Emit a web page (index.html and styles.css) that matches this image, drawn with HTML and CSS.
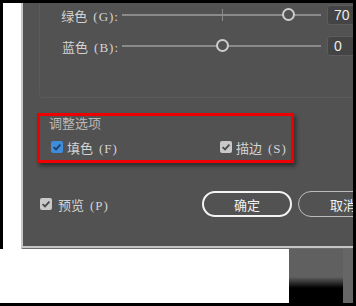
FILE: index.html
```html
<!DOCTYPE html>
<html lang="zh-CN">
<head>
  <meta charset="UTF-8">
  <title>颜色调整</title>
  <link rel="stylesheet" href="styles.css">
</head>
<body>
<div class="screen">
  <div class="upper">
    <div class="paper"></div>
    <div class="dialog">
      <div class="color-group">
        <div class="slider-row">
          <span class="field-label">绿色<span class="key">(G):</span></span>
          <div class="slider">
            <span class="tick"></span>
            <span class="knob" style="left: 166px"></span>
          </div>
          <div class="value-box">70</div>
        </div>
        <div class="slider-row">
          <span class="field-label">蓝色<span class="key">(B):</span></span>
          <div class="slider">
            <span class="knob" style="left: 100px"></span>
          </div>
          <div class="value-box">0</div>
        </div>
      </div>

      <div class="adjust-group">
        <div class="group-title">调整选项</div>
        <div class="check-row">
          <label class="check fill-check">
            <span class="box box-blue">
              <svg viewBox="0 0 12 12" width="12" height="12"><polyline points="2.6,6.2 5,8.4 9.4,3.6" fill="none" stroke="#1d3f66" stroke-width="1.8"/></svg>
            </span>
            <span>填色<span class="key">(F)</span></span>
          </label>
          <label class="check">
            <span class="box box-gray">
              <svg viewBox="0 0 12 12" width="12" height="12"><polyline points="2.6,6.2 5,8.4 9.4,3.6" fill="none" stroke="#4a4a4a" stroke-width="1.8"/></svg>
            </span>
            <span>描边<span class="key">(S)</span></span>
          </label>
        </div>
      </div>

      <div class="footer">
        <label class="check preview">
          <span class="box box-gray">
            <svg viewBox="0 0 12 12" width="12" height="12"><polyline points="2.6,6.2 5,8.4 9.4,3.6" fill="none" stroke="#4a4a4a" stroke-width="1.8"/></svg>
          </span>
          <span>预览<span class="key">(P)</span></span>
        </label>
        <button class="btn btn-ok">确定</button>
        <button class="btn">取消</button>
      </div>
    </div>
  </div>
  <div class="lower">
    <div class="paper-bottom"></div>
    <div class="shade"></div>
    <div class="side"></div>
  </div>
</div>
</body>
</html>
```

FILE: styles.css
```css
html, body {
    margin: 0;
    padding: 0;
    background: #000;
    overflow: hidden;
}

.screen {
    width: 356px;
    height: 306px;
    padding: 3px 0;
    box-sizing: border-box;
    font-family: "Liberation Serif", "Noto Sans CJK SC", serif;
    font-size: 13px;
    color: #d4d4d4;
}

.key {
    margin-left: 6px;
    letter-spacing: 1px;
    font-family: "Liberation Serif", serif;
}

.upper {
    height: 246px;
    padding-left: 3px;

    display: flex;
}

.paper {
    width: 18px;
    background: #fff;
}

.dialog {
    width: 332px;
    box-sizing: border-box;
    background: #525252;
    border-left: 2px solid #c8c8c8;
    border-bottom: 1px solid #6c6c6c;
    box-shadow: inset 0 -2px 0 #c6c6c6;
    overflow: hidden;
}

/* colour sliders */
.color-group {
    width: 340px;
    margin-left: 16px;
    padding: 2px 0 41px;
    border: 1px solid #5a5a5a;
    border-top: none;
    border-radius: 0 0 0 5px;

    display: flex;
    flex-direction: column;
    gap: 11px;
}

.slider-row {
    height: 20px;

    display: flex;
    align-items: center;
}

.field-label {
    width: 79px;
    text-align: right;
    white-space: nowrap;
}

.slider {
    position: relative;
    width: 199px;
    height: 2px;
    margin-left: 3px;
    background: #8a8a8a;
}

.tick {
    position: absolute;
    left: 100px;
    top: -5px;
    width: 1px;
    height: 12px;
    background: #8a8a8a;
}

.knob {
    position: absolute;
    top: -6px;
    width: 13px;
    height: 13px;
    margin-left: -6px;
    box-sizing: border-box;
    border: 2px solid #cdcdcd;
    border-radius: 50%;
    background: #525252;
}

.value-box {
    width: 40px;
    height: 20px;
    margin-left: 6px;
    padding-left: 6px;
    box-sizing: border-box;
    background: #444;
    border: 1px solid #5c5c5c;
    border-radius: 3px;
    font-family: "Liberation Sans", sans-serif;
    font-size: 14px;
    line-height: 18px;
    color: #ececec;
}

/* highlighted group */
.adjust-group {
    width: 257px;
    margin: 15px 0 0 14px;
    padding: 0 0 5px;
    box-sizing: border-box;
    border: 3px solid #ee0000;
    box-shadow: 2px 3px 4px rgba(0, 0, 0, 0.45);
}

.group-title {
    padding-left: 9px;
    line-height: 16px;
    color: #b9b9b9;
}

.check-row {
    height: 16px;
    margin-top: 7px;
    padding-left: 11px;

    display: flex;
    align-items: center;
}

.check {
    display: flex;
    align-items: center;
    gap: 4px;
    white-space: nowrap;
}

.fill-check {
    width: 169px;
}

.box {
    width: 12px;
    height: 12px;
    border-radius: 2px;

    display: flex;
}

.box-blue {
    background: #3e8ddd;
}

.box-gray {
    background: #c9c9c9;
}

/* footer */
.footer {
    height: 26px;
    margin-top: 28px;
    padding-left: 17px;

    display: flex;
    align-items: center;
    gap: 6px;
}

.preview {
    width: 156px;
    flex: none;
    gap: 6px;
}

.btn {
    width: 90px;
    height: 26px;
    flex: none;
    box-sizing: border-box;
    border: 1.5px solid #bcbcbc;
    border-radius: 13px;
    background: transparent;
    font-family: "Noto Sans CJK SC", sans-serif;
    font-size: 13px;
    color: #f2f2f2;
    padding: 0;
}

.btn-ok {
    border: 2px solid #f4f4f4;
}

/* below the dialog */
.lower {
    height: 54px;

    display: flex;
}

.paper-bottom {
    width: 289px;
    background: #fff;
}

.shade {
    width: 54px;
    background: linear-gradient(to bottom, #606060 0, #606060 28px, #000 39px);
}

.side {
    width: 10px;
    background: #666;
}
```
